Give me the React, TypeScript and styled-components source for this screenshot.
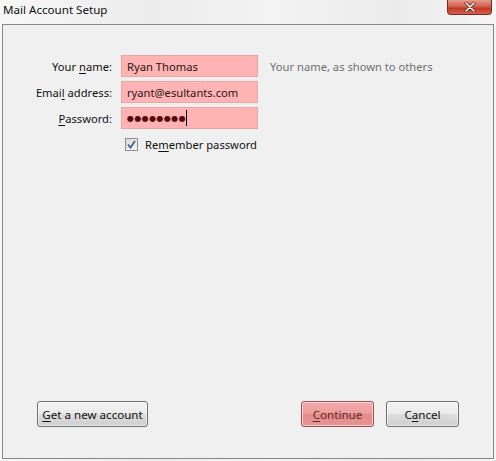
import React from "react";
import styled, { createGlobalStyle } from "styled-components";

const Global = createGlobalStyle`
  html, body { margin: 0; padding: 0; }
  body {
    width: 496px; height: 461px; overflow: hidden;
    font-family: "Noto Sans", "Open Sans", "DejaVu Sans", sans-serif;
    font-size: 11.2px;
  }
`;

const Window = styled.div`
  width: 496px;
  height: 461px;
  display: flex;
  flex-direction: column;
  background: linear-gradient(90deg, #f7f7f7 0%, #ececec 30%, #f3f3f3 55%, #ebebeb 80%, #f5f5f5 100%);
  box-sizing: border-box;
`;

const TitleBar = styled.div`
  height: 24px;
  display: flex;
  align-items: flex-start;
  justify-content: space-between;
  padding-left: 3px;
  padding-right: 3px;
  flex-shrink: 0;
`;

const Title = styled.div`
  margin-top: 2px;
  font-size: 11.6px;
  line-height: 16px;
  color: #111;
`;

const CloseButton = styled.div`
  width: 45px;
  height: 15px;
  margin-right: 1px;
  box-sizing: border-box;
  border: 1px solid #7a2a20;
  border-top: none;
  border-radius: 0 0 4px 4px;
  background: linear-gradient(180deg, #e39a8c 0%, #d0624f 45%, #c23a27 60%, #d4604b 100%);
  display: flex;
  align-items: center;
  justify-content: center;
`;

const Panel = styled.div`
  flex: 1;
  margin: 0 2px 2px 2px;
  border: 1px solid #888;
  background: #f0f0f0;
  display: flex;
  flex-direction: column;
  justify-content: space-between;
`;

const Form = styled.div`
  display: grid;
  grid-template-columns: 109px 137px auto;
  grid-auto-rows: 22px;
  row-gap: 4px;
  align-items: center;
  padding-top: 30px;
`;

const Label = styled.label`
  text-align: right;
  color: #111;
  white-space: nowrap;
`;

const Key = styled.span`
  text-decoration: underline;
  text-underline-offset: 2px;
`;

const Field = styled.div`
  grid-column: 2;
  margin-left: 9px;
  width: 137px;
  height: 22px;
  box-sizing: border-box;
  border: 1px solid #e7a5a5;
  background: #ffb3b3;
  display: flex;
  align-items: center;
  padding-left: 5px;
  color: #2a1515;
  white-space: nowrap;
  overflow: hidden;
`;

const Dots = styled.span`
  font-size: 8px;
  letter-spacing: 0.4px;
  color: #5a0a0a;
  font-family: "DejaVu Sans", sans-serif;
`;

const Caret = styled.span`
  display: inline-block;
  width: 1px;
  height: 16px;
  background: #000;
  margin-left: 0px;
`;

const Hint = styled.div`
  margin-left: 21px;
  color: #707070;
  white-space: nowrap;
`;

const CheckRow = styled.div`
  grid-column: 2 / span 2;
  margin-left: 13px;
  display: flex;
  align-items: center;
  gap: 7px;
  color: #111;
`;

const Box = styled.span`
  width: 13px;
  height: 13px;
  box-sizing: border-box;
  border: 1px solid #8e8f8f;
  background: linear-gradient(135deg, #dcdcdc 0%, #f6f6f6 100%);
  display: flex;
  align-items: center;
  justify-content: center;
`;

const ButtonBar = styled.div`
  display: flex;
  align-items: center;
  padding: 0 34px 31px 34px;
  gap: 12px;
`;

const Spacer = styled.div`
  flex: 1;
`;

const Button = styled.button<{ $primary?: boolean; $w: number }>`
  width: ${(p) => p.$w}px;
  height: 26px;
  border-radius: 3px;
  border: 1px solid ${(p) => (p.$primary ? "#a05050" : "#707070")};
  background: ${(p) =>
    p.$primary
      ? "linear-gradient(180deg, #f3a9a9 0%, #ee9c9c 50%, #e58a8a 51%, #e99393 100%)"
      : "linear-gradient(180deg, #f2f2f2 0%, #ebebeb 50%, #dddddd 51%, #cfcfcf 100%)"};
  box-shadow: inset 0 0 0 1px rgba(255, 255, 255, 0.55);
  font-family: inherit;
  font-size: 11.6px;
  color: ${(p) => (p.$primary ? "#5a2a2a" : "#111")};
  padding: 0;
`;

const CheckIcon = () => (
  <svg width="9" height="9" viewBox="0 0 9 9">
    <path d="M1 4.5 L3.5 7.5 L8 1" fill="none" stroke="#3d5a8a" strokeWidth="1.7" />
  </svg>
);

const CloseIcon = () => (
  <svg width="12" height="10" viewBox="0 0 12 10">
    <path d="M2 1 L10 9 M10 1 L2 9" stroke="#5a1a10" strokeWidth="3" strokeLinecap="round" />
    <path d="M2 1 L10 9 M10 1 L2 9" stroke="#ffffff" strokeWidth="1.6" strokeLinecap="round" />
  </svg>
);

export default function App() {
  return (
    <>
      <Global />
      <Window>
        <TitleBar>
          <Title>Mail Account Setup</Title>
          <CloseButton>
            <CloseIcon />
          </CloseButton>
        </TitleBar>
        <Panel>
          <Form>
            <Label>
              Your <Key>n</Key>ame:
            </Label>
            <Field>Ryan Thomas</Field>
            <Hint>Your name, as shown to others</Hint>

            <Label>
              Emai<Key>l</Key> address:
            </Label>
            <Field>ryant@esultants.com</Field>
            <span />

            <Label>
              <Key>P</Key>assword:
            </Label>
            <Field>
              <Dots>●●●●●●●●</Dots>
              <Caret />
            </Field>
            <span />

            <CheckRow>
              <Box>
                <CheckIcon />
              </Box>
              <span>
                Re<Key>m</Key>ember password
              </span>
            </CheckRow>
          </Form>
          <ButtonBar>
            <Button $w={111}>
              <Key>G</Key>et a new account
            </Button>
            <Spacer />
            <Button $primary $w={73}>
              <Key>C</Key>ontinue
            </Button>
            <Button $w={73}>
              C<Key>a</Key>ncel
            </Button>
          </ButtonBar>
        </Panel>
      </Window>
    </>
  );
}
